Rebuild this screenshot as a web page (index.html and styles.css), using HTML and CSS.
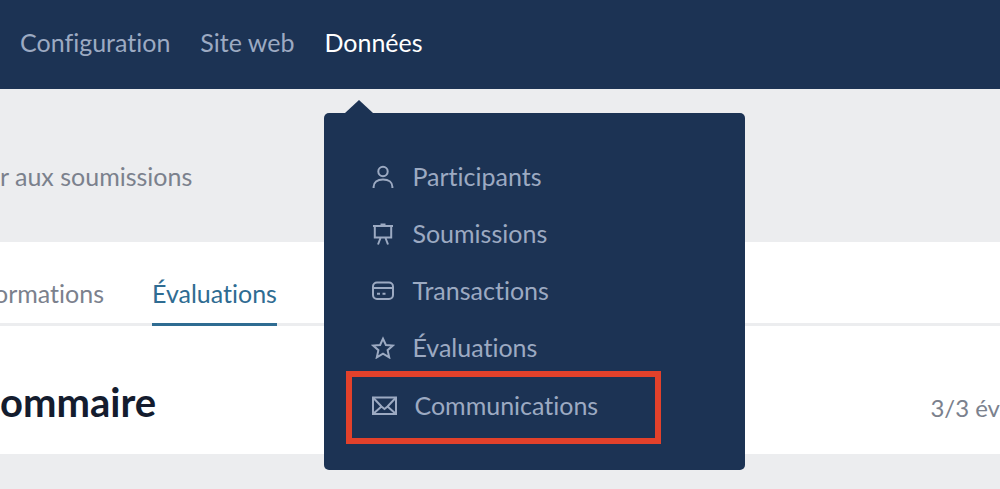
FILE: index.html
```html
<!DOCTYPE html>
<html lang="fr">
<head>
<meta charset="utf-8">
<meta name="viewport" content="width=device-width, initial-scale=1">
<title>Évaluations</title>
<link rel="stylesheet" href="styles.css">
</head>
<body>
<header class="topbar">
  <nav class="nav">
    <a class="nav-link" href="#">Configuration</a>
    <a class="nav-link" href="#">Site web</a>
    <div class="nav-group">
      <a class="nav-link nav-link-active" href="#">Données</a>
      <div class="menu">
        <a class="menu-item" href="#">
          <svg class="icon" viewBox="0 0 24 24"><circle cx="12" cy="7.500" r="4.700"/><path d="M2.600 24v-1.200c0-4.400 3.500-7.300 9.400-7.300s9.400 2.900 9.400 7.300V24"/></svg>
          Participants</a>
        <a class="menu-item" href="#">
          <svg class="icon" viewBox="0 0 24 24"><path d="M2 5h20M3.800 5v11.500h16.400V5M10.500 4.500v-1h3v1M9.500 17l-2.500 6.500M14.500 17l2.500 6.500"/></svg>
          Soumissions</a>
        <a class="menu-item" href="#">
          <svg class="icon" viewBox="0 0 24 24"><rect x="2" y="4.500" width="20" height="16.500" rx="4"/><path d="M2 10h20M6 15.700h3M11.500 15.700h3"/></svg>
          Transactions</a>
        <a class="menu-item" href="#">
          <svg class="icon" viewBox="0 0 24 24"><path d="M12 3.600l2.900 6.400 6.900.600-5.200 4.600 1.600 7.200-6.200-3.700-6.200 3.700 1.600-7.200-5.200-4.600 6.900-.600z"/></svg>
          Évaluations</a>
        <a class="menu-item menu-item-marked" href="#">
          <svg class="icon icon-wide" viewBox="0 0 26 24"><rect x="2" y="4.500" width="23" height="16.500"/><path d="M2 4.500l8.500 9 3 2.500 3-2.500 8.500-9M2 21l8.500-7.500M25 21l-8.500-7.500"/></svg>
          Communications</a>
      </div>
    </div>
  </nav>
</header>
<main>
  <div class="crumb"><a class="crumb-link" href="#">r aux soumissions</a></div>
  <section class="card">
    <nav class="tabs">
      <a class="tab" href="#">ormations</a>
      <a class="tab tab-active" href="#">Évaluations</a>
    </nav>
    <div class="summary">
      <h1 class="title">ommaire</h1>
      <span class="count">3/3 év</span>
    </div>
  </section>
</main>
</body>
</html>
```
FILE: styles.css
```css
* { box-sizing: border-box; }
body {
  margin: 0;
  min-height: 100vh;
  background: #ecedef;
  color: #7b818d;
  font: 25px/32px Lato, "Open Sans", sans-serif;
  font-variant-ligatures: none;
  overflow-x: hidden;
}
a { color: inherit; text-decoration: none; }
.topbar { background: #1c3354; padding: 26px 20px 31px; }
.nav { display: flex; gap: 30px; }
.nav-group { position: relative; }
.nav-link { display: block; color: #9caac2; white-space: nowrap; }
.nav-link-active { color: #fff; }
.menu {
  position: absolute;
  top: 87px;
  left: 0;
  z-index: 1;
  width: 421px;
  padding: 34px 22px 26px;
  border-radius: 5px;
  background: #1c3354;
  color: #9caac2;
}
.menu::before {
  content: "";
  position: absolute;
  top: -13px;
  left: 21px;
  border: 14px solid transparent;
  border-top: 0;
  border-bottom: 13px solid #1c3354;
}
.menu-item {
  display: flex;
  align-items: center;
  gap: 17px;
  height: 57px;
  padding: 0 25px;
}
.menu-item-marked {
  width: 315px;
  height: 73px;
  margin-top: -4px;
  padding: 0 19px 5px;
  border: 6px solid #e2412b;
}
.icon {
  flex: none;
  width: 24px;
  height: 24px;
  fill: none;
  stroke: currentColor;
  stroke-width: 2;
}
.icon-wide { width: 26px; }
.crumb { padding: 71px 0 50px; }
.card { background: #fff; padding-bottom: 28px; }
.tabs {
  display: flex;
  gap: 48px;
  margin-left: -6px;
  border-bottom: 3px solid #ecedef;
  padding-top: 35px;
}
.tab { padding-bottom: 14px; margin-bottom: -3px; border-bottom: 3px solid transparent; }
.tab-active { color: #2f6c92; border-color: #2f6c92; }
.summary {
  display: flex;
  justify-content: space-between;
  align-items: baseline;
  padding-top: 52px;
}
.title { margin: 0; color: #141c2e; font-size: 40px; line-height: 48px; font-weight: 700; }
.count { font-size: 24px; white-space: nowrap; }
```
